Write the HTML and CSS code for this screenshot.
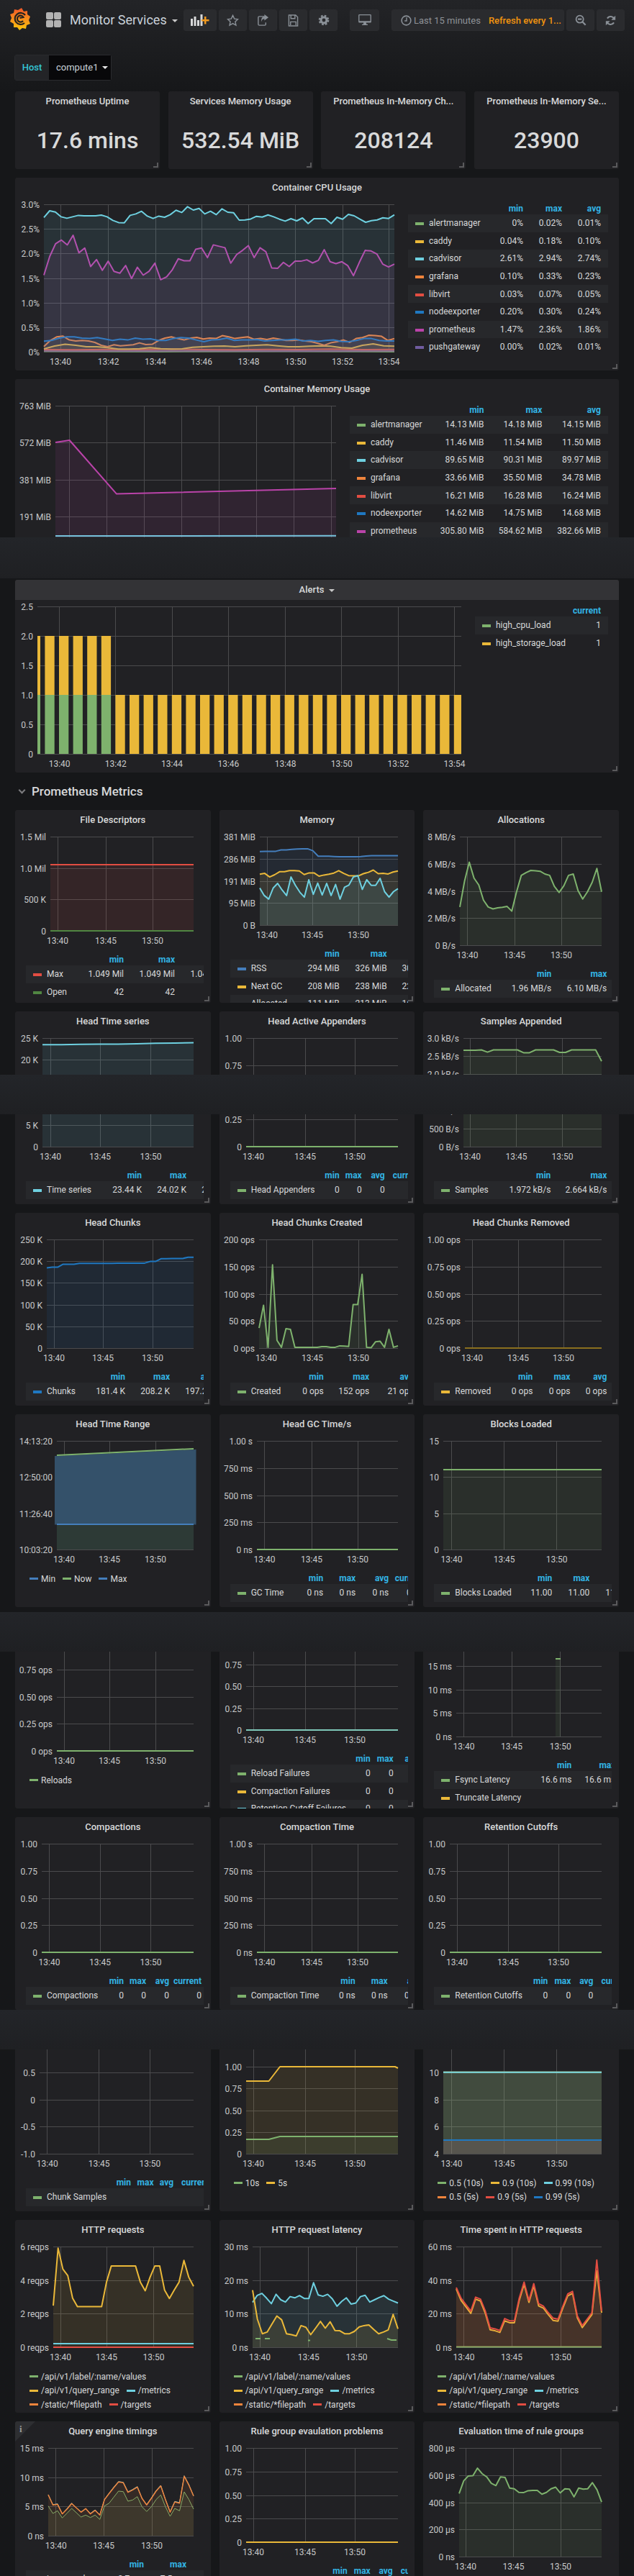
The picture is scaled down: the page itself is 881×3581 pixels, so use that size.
FILE: index.html
```html
<!DOCTYPE html>
<html lang="en">
<head>
  <meta charset="UTF-8">
  <meta name="viewport" content="width=device-width, initial-scale=1.0">
  <title>Monitor Services - Grafana</title>
  <link rel="stylesheet" href="styles.css">
</head>
<body>
  <nav class="navbar">
    <svg class="logo" viewBox="0 0 28 31" width="28" height="31">
      <defs>
        <linearGradient id="flame" x1="0" y1="0" x2="0" y2="1">
          <stop offset="0" stop-color="#f0562a"/>
          <stop offset="1" stop-color="#fbc60c"/>
        </linearGradient>
      </defs>
      <path fill="url(#flame)" d="M16 0l3 5 5-1 0 5 4 3-2 5 2 5-5 2-1 5-5-1-4 3-3-4-5 0 0-5-5-3 2-5-2-5 5-2 1-5 5 1z"/>
      <path fill="none" stroke="#23201f" stroke-width="2.2" d="M20 21a8 8 0 1 1 1-11"/>
      <path fill="none" stroke="#23201f" stroke-width="2.2" d="M18 18a4.5 4.5 0 1 1 .5-5l-5 1"/>
    </svg>
    <div class="apps-icon"><i></i><i></i><i></i><i></i></div>
    <div class="dash-title">Monitor Services<span class="caret"></span></div>
    <button class="btn btn-add">
      <svg viewBox="0 0 26 16" width="26" height="16">
        <path fill="#d8d9da" d="M0 6h3v10H0zM4.500 3h3v13h-3zM9 8h3v8H9zM13.500 0h3v16h-3z"/>
        <path fill="#f29a1f" d="M19 3h2.500v4H25.500v2.500H21.500v4H19v-4H15V7h4z"/>
      </svg>
    </button>
    <button class="btn">
      <svg viewBox="0 0 18 18" width="17" height="17"><path fill="none" stroke="#8a9097" stroke-width="1.500" d="M9 1.500l2.300 5 5.200.6-3.900 3.600 1.100 5.300L9 13.300 4.300 16l1.100-5.300L1.500 7.100l5.200-.6z"/></svg>
    </button>
    <button class="btn">
      <svg viewBox="0 0 18 18" width="17" height="17"><path fill="none" stroke="#8a9097" stroke-width="1.500" d="M11 3H3.500A1.500 1.500 0 0 0 2 4.500v10A1.500 1.500 0 0 0 3.500 16h8a1.500 1.500 0 0 0 1.500-1.500V12"/><path fill="#8a9097" d="M11 0l6 4.500-6 4.500V6.500C8.500 6.500 7 8 6.500 11 6 6 8 3.300 11 3z"/></svg>
    </button>
    <button class="btn">
      <svg viewBox="0 0 16 18" width="15" height="17"><path fill="none" stroke="#8a9097" stroke-width="1.500" d="M1.500 1h10l3 3v13h-13zM4.500 1v5h6V1M4 16v-5h8v5"/></svg>
    </button>
    <button class="btn">
      <svg viewBox="0 0 18 18" width="16" height="16"><circle cx="9" cy="9" r="4.500" fill="none" stroke="#8a9097" stroke-width="3.500"/><circle cx="9" cy="9" r="7" fill="none" stroke="#8a9097" stroke-width="2.500" stroke-dasharray="3 2.500"/></svg>
    </button>
    <button class="btn btn-tv">
      <svg viewBox="0 0 20 18" width="18" height="16"><path fill="#8a9097" d="M1.500 0h17A1.500 1.500 0 0 1 20 1.500v10a1.500 1.500 0 0 1-1.500 1.500H12l.5 2.500h2V17h-9v-1.500h2L8 13H1.500A1.500 1.500 0 0 1 0 11.500v-10A1.500 1.500 0 0 1 1.500 0zM1.500 1.500v9h17v-9z"/></svg>
    </button>
    <button class="btn btn-time">
      <svg viewBox="0 0 16 16" width="15" height="15"><circle cx="8" cy="8" r="6.800" fill="none" stroke="#8a9097" stroke-width="1.700"/><path fill="none" stroke="#8a9097" stroke-width="1.500" d="M8.500 3.500v5H5.500"/></svg>
      <span class="time-text">Last 15 minutes</span>
      <span class="refresh-text">Refresh every 1...</span>
    </button>
    <button class="btn">
      <svg viewBox="0 0 18 18" width="16" height="16"><circle cx="7.500" cy="7.500" r="5.700" fill="none" stroke="#8a9097" stroke-width="2"/><path stroke="#8a9097" stroke-width="2.500" d="M11.500 11.500L16.500 16.500M4.500 7.500h6"/></svg>
    </button>
    <button class="btn">
      <svg viewBox="0 0 18 18" width="15" height="15"><path fill="none" stroke="#8a9097" stroke-width="2.500" d="M15 6.500A6.500 6.500 0 0 0 3.500 5.500M3 11.500A6.500 6.500 0 0 0 14.500 12.500"/><path fill="#8a9097" d="M17 1v7h-7zM1 17v-7h7z"/></svg>
    </button>
  </nav>

  <div class="submenu">
    <span class="var-label">Host</span>
    <span class="var-value">compute1<span class="caret"></span></span>
  </div>

  <section class="stats">
    <div class="panel stat"><h3 class="panel-title">Prometheus Uptime</h3><div class="stat-value">17.6 mins</div></div>
    <div class="panel stat"><h3 class="panel-title">Services Memory Usage</h3><div class="stat-value">532.54 MiB</div></div>
    <div class="panel stat"><h3 class="panel-title">Prometheus In-Memory Ch...</h3><div class="stat-value">208124</div></div>
    <div class="panel stat"><h3 class="panel-title">Prometheus In-Memory Se...</h3><div class="stat-value">23900</div></div>
  </section>

  <section id="wide" class="wide-panels"></section>

  <div class="row-title"><span class="chevron"></span>Prometheus Metrics</div>

  <section id="metrics" class="metrics-grid"></section>

  <!-- the sticky navbar shows up again as blank strips in the full page capture -->
  <div class="nav-strip strip-1"></div>
  <div class="nav-strip strip-2"></div>
  <div class="nav-strip strip-3"></div>
  <div class="nav-strip strip-4"></div>

  <script src="charts.js"></script>
</body>
</html>
```

FILE: styles.css
```css
* {
  box-sizing: border-box;
}

html, body {
  margin: 0;
  padding: 0;
}

body {
  position: relative;
  height: 3581px;
  overflow: hidden;
  font-family: Roboto, "Liberation Sans", sans-serif;
  font-size: 12px;
  color: #d8d9da;
  background: #161719 linear-gradient(#232427, #161719 130px) no-repeat;
}

.navbar {
  display: flex;
  align-items: flex-start;
  height: 56px;
  padding: 11px 0 0 14px;
}

.apps-icon {
  display: grid;
  grid-template-columns: 10px 10px;
  gap: 1px;
  margin: 6px 0 0 22px;
}

.apps-icon i {
  display: block;
  width: 10px;
  height: 10px;
  border-radius: 2px;
  background: #b2b2b2;
}

.dash-title {
  width: 158px;
  margin: 5px 0 0 12px;
  font-size: 18px;
  line-height: 24px;
  color: #c9d1d9;
  white-space: nowrap;
}

.caret {
  display: inline-block;
  margin-left: 7px;
  vertical-align: middle;
  border-top: 4px solid #c8c8c8;
  border-left: 4px solid transparent;
  border-right: 4px solid transparent;
}

.btn {
  display: flex;
  align-items: center;
  justify-content: center;
  width: 39px;
  height: 30px;
  margin: 2px 3px 0 0;
  padding: 0;
  border: 1px solid #2b2c2f;
  border-radius: 3px;
  background: #2a2b2e;
  font: inherit;
}

.btn-add {
  width: 46px;
}

.btn-tv {
  width: 41px;
  margin-left: 14px;
}

.btn-time {
  justify-content: flex-start;
  width: 240px;
  margin-left: 14px;
  padding-left: 12px;
  font-size: 13px;
  white-space: nowrap;
}

.time-text {
  margin-left: 3px;
  color: #8e9297;
}

.refresh-text {
  margin-left: 11px;
  font-weight: 500;
  color: #f1930f;
}

.submenu {
  display: flex;
  width: 135px;
  height: 36px;
  margin: 20px 0 0 20px;
  border: 1px solid #2a2b2e;
  border-radius: 3px;
  font-size: 13px;
  line-height: 34px;
}

.var-label {
  width: 47px;
  text-align: center;
  font-weight: 500;
  color: #33c5d5;
  background: #232427;
}

.var-value {
  flex: 1;
  padding-left: 10px;
  color: #c9d1d9;
  background: #08080a;
}

.var-value .caret {
  margin: -2px 0 0 5px;
  border-top-color: #e6e6e6;
}

.panel {
  position: relative;
  height: 268px;
  overflow: hidden;
  border-radius: 3px;
  background: #212124;
}

.panel::after {
  content: "";
  position: absolute;
  right: 2px;
  bottom: 2px;
  width: 5px;
  height: 5px;
  border-right: 2px solid #5a5a5c;
  border-bottom: 2px solid #5a5a5c;
}

.panel-title {
  height: 28px;
  margin: 0;
  padding-top: 6px;
  font-size: 13px;
  font-weight: 500;
  line-height: 16px;
  text-align: center;
  white-space: nowrap;
  color: #d8d9da;
}

.panel-title.active {
  padding-top: 6px;
  background: #333336;
}

.stats {
  display: grid;
  grid-template-columns: repeat(4, 201px);
  justify-content: space-between;
  margin: 15px 21px 0;
}

.stat {
  height: 108px;
}

.stat-value {
  margin-top: 21px;
  font-size: 32px;
  font-weight: 500;
  line-height: 38px;
  text-align: center;
}

.wide-panels {
  display: flex;
  flex-direction: column;
  gap: 12px;
  margin: 12px 21px 0;
}

.wide-panels .panel:last-child {
  margin-top: -1px;
}

.graph-body {
  display: flex;
}

.graph-body svg {
  display: block;
  flex: none;
}

.tick {
  font-size: 12px;
  fill: #c8c9ca;
}

.grid-line {
  stroke: #4b4b4d;
  stroke-width: 1;
  shape-rendering: crispEdges;
}

.legend {
  flex: none;
  overflow: hidden;
  white-space: nowrap;
}

.wide-panels .legend {
  margin-top: 6px;
}

.legend-row {
  display: grid;
  align-items: center;
  height: 24.6px;
  min-width: 100%;
  width: max-content;
}

.legend-head {
  height: 17px;
  font-weight: 700;
  color: #33b5e5;
}

.legend-row:nth-child(even) {
  background: #27282b;
}

.legend-cell {
  text-align: right;
}

.legend-first {
  margin-left: auto;
}

.legend-name {
  display: flex;
  align-items: center;
  overflow: visible;
  padding-left: 10px;
}

.swatch {
  flex: none;
  width: 12px;
  height: 4px;
  margin: 2px 7px 0 0;
}

.inline-legend {
  margin-left: 20px;
}

.inline-line {
  display: flex;
  align-items: center;
  gap: 10px;
  height: 19.5px;
  white-space: nowrap;
}

.inline-item {
  display: flex;
  align-items: center;
}

.inline-item .swatch {
  height: 3px;
  margin: 0 4px 0 0;
}

.info-corner {
  position: absolute;
  top: 0;
  left: 0;
  width: 28px;
  height: 28px;
  padding: 4px 0 0 6px;
  clip-path: polygon(0 0, 100% 0, 0 100%);
  background: #2e2f32;
  font-family: "Liberation Serif", serif;
  font-size: 13px;
  font-weight: 700;
  line-height: 14px;
  color: #9a9b9c;
}

.row-title {
  display: flex;
  align-items: center;
  height: 52px;
  padding-left: 27px;
  font-size: 17px;
  font-weight: 500;
}

.chevron {
  width: 7px;
  height: 7px;
  margin: 0 10px 3px 0;
  border-right: 2px solid #7b7b7e;
  border-bottom: 2px solid #7b7b7e;
  transform: rotate(45deg);
}

.metrics-grid {
  display: grid;
  grid-template-columns: repeat(3, 1fr);
  gap: 12px;
  margin: 0 21px;
}

.nav-strip {
  position: absolute;
  left: 0;
  right: 0;
  height: 55px;
  background: linear-gradient(#232529, #1f2023);
}

.strip-1 {
  top: 747px;
  height: 57px;
}

.strip-2 {
  top: 1494px;
}

.strip-3 {
  top: 2241px;
}

.strip-4 {
  top: 2794px;
}
```

FILE: charts.js
```js
const GREEN = '#7eb26d', YELLOW = '#eab839', CYAN = '#6ed0e0', ORANGE = '#ef843c',
  RED = '#e24d42', BLUE = '#1f78c1', MAGENTA = '#ba43a9', PURPLE = '#705da0',
  DKGREEN = '#508642', STEEL = '#447ebc';

const MIN3 = ['min', 'max', 'avg'];
const MIN4 = ['min', 'max', 'avg', 'current'];
const HTTP_LEGEND = [
  [['/api/v1/label/:name/values', GREEN]],
  [['/api/v1/query_range', YELLOW], ['/metrics', CYAN]],
  [['/static/*filepath', ORANGE], ['/targets', RED]]
];
const HTTP_BOTTOM = [
  { c: CYAN, y: [.965, .965], w: 2 },
  { c: ORANGE, y: [1, 1], w: 2 },
  { c: RED, y: [1, 1], w: 2 }
];

// line series: y values are plot readings, range gives the readings at plot top and bottom
const wide = [
  {
    title: 'Container CPU Usage', left: 40, right: 527, bottom: 242, width: 546,
    ylabels: ['3.0%', '2.5%', '2.0%', '1.5%', '1.0%', '0.5%', '0%'],
    xs: [63, 129.6, 195, 259, 324.5, 389.7, 455, 519.5],
    xlabels: ['13:40', '13:42', '13:44', '13:46', '13:48', '13:50', '13:52', '13:54'],
    range: [853, 1467],
    series: [
      { c: GREEN, y: [1465, 1466, 1465, 1466], fill: 1 },
      { c: PURPLE, y: [1463, 1464, 1463, 1464, 1463], fill: 1 },
      { c: RED, y: [1458, 1459, 1457, 1458, 1456, 1458, 1459, 1457, 1458, 1456, 1458, 1457], fill: 1 },
      { c: YELLOW, y: [1455, 1443, 1436, 1440, 1446, 1446, 1450, 1456, 1456, 1454, 1450, 1454, 1456, 1455, 1448, 1446, 1444, 1443, 1446, 1442, 1440, 1438, 1442, 1446, 1446, 1444, 1442, 1444, 1450, 1452, 1440, 1434, 1442, 1444], fill: 1 },
      { c: ORANGE, y: [1445, 1420, 1405, 1402, 1418, 1422, 1420, 1422, 1428, 1440, 1446, 1438, 1442, 1440, 1438, 1430, 1437, 1436, 1420, 1410, 1405, 1412, 1418, 1410, 1407, 1414, 1410, 1412, 1400, 1405, 1412, 1408, 1405, 1415, 1412, 1416, 1410, 1415, 1420, 1420, 1418, 1422, 1425, 1432, 1440, 1430, 1425, 1418, 1428, 1412, 1408, 1398, 1400, 1403, 1420, 1412], fill: 1 },
      { c: BLUE, y: [1423, 1420, 1410, 1405, 1405, 1410, 1412, 1408, 1414, 1420, 1415, 1418, 1410, 1415, 1413, 1420, 1420, 1412, 1408, 1410, 1418, 1425, 1418, 1416, 1410, 1420, 1418, 1418, 1416, 1422, 1420, 1418, 1418, 1415, 1422, 1420, 1424, 1420, 1418, 1424, 1425, 1420, 1412, 1412, 1420, 1422, 1422], fill: 1 },
      { c: MAGENTA, y: [1148, 1070, 1017, 1002, 1022, 982, 1055, 1035, 1112, 1083, 1128, 1090, 1132, 1140, 1108, 1162, 1115, 1148, 1132, 1098, 1167, 1155, 1125, 1080, 1088, 1088, 1040, 1035, 1075, 1022, 1028, 1034, 1098, 1062, 1045, 1025, 1075, 1034, 1050, 1118, 1120, 1095, 1112, 1090, 1090, 1084, 1097, 1086, 1042, 1092, 1100, 1092, 1108, 1150, 1095, 1045, 1047, 1060, 1102, 1114, 1102], fill: 1 },
      { c: CYAN, y: [908, 880, 885, 905, 911, 905, 899, 901, 901, 901, 898, 905, 920, 929, 930, 899, 893, 882, 902, 912, 902, 907, 896, 878, 887, 863, 877, 870, 893, 882, 896, 872, 886, 888, 919, 918, 914, 903, 906, 897, 905, 915, 923, 913, 922, 910, 933, 913, 913, 913, 933, 907, 915, 895, 901, 915, 928, 921, 918, 909, 912, 897], fill: 1 }
    ],
    legend: {
      x: 546, w: 278, rights: [706, 760, 814], heads: MIN3,
      rows: [
        ['alertmanager', GREEN, '0%', '0.02%', '0.01%'],
        ['caddy', YELLOW, '0.04%', '0.18%', '0.10%'],
        ['cadvisor', CYAN, '2.61%', '2.94%', '2.74%'],
        ['grafana', ORANGE, '0.10%', '0.33%', '0.23%'],
        ['libvirt', RED, '0.03%', '0.07%', '0.05%'],
        ['nodeexporter', BLUE, '0.20%', '0.30%', '0.24%'],
        ['prometheus', MAGENTA, '1.47%', '2.36%', '1.86%'],
        ['pushgateway', PURPLE, '0.00%', '0.02%', '0.01%']
      ]
    }
  },
  {
    title: 'Container Memory Usage', left: 56, right: 446, bottom: 242, width: 465,
    ylabels: ['763 MiB', '572 MiB', '381 MiB', '191 MiB', '0 B'],
    xs: [75.6, 127, 179.5, 231, 283.5, 335, 387.4, 439],
    xlabels: ['13:40', '13:42', '13:44', '13:46', '13:48', '13:50', '13:52', '13:54'],
    series: [
      { c: CYAN, y: [.883, .882], fill: 1 },
      { c: MAGENTA, pts: [[56, 88], [75.6, 85], [141, 159.6], [446, 152]], fill: 1 }
    ],
    legend: {
      x: 465, w: 359, rights: [651.5, 732.4, 814], heads: MIN3,
      rows: [
        ['alertmanager', GREEN, '14.13 MiB', '14.18 MiB', '14.15 MiB'],
        ['caddy', YELLOW, '11.46 MiB', '11.54 MiB', '11.50 MiB'],
        ['cadvisor', CYAN, '89.65 MiB', '90.31 MiB', '89.97 MiB'],
        ['grafana', ORANGE, '33.66 MiB', '35.50 MiB', '34.78 MiB'],
        ['libvirt', RED, '16.21 MiB', '16.28 MiB', '16.24 MiB'],
        ['nodeexporter', BLUE, '14.62 MiB', '14.75 MiB', '14.68 MiB'],
        ['prometheus', MAGENTA, '305.80 MiB', '584.62 MiB', '382.66 MiB']
      ]
    }
  },
  {
    title: 'Alerts', active: true, left: 31, right: 620, bottom: 242, width: 639,
    ylabels: ['2.5', '2.0', '1.5', '1.0', '0.5', '0'],
    xs: [61.6, 139.7, 218, 296.4, 375.6, 453.7, 532.4, 610.5],
    xlabels: ['13:40', '13:42', '13:44', '13:46', '13:48', '13:50', '13:52', '13:54'],
    bars: true,
    legend: {
      x: 639, w: 185, rights: [814], heads: ['current'],
      rows: [
        ['high_cpu_load', GREEN, '1'],
        ['high_storage_load', YELLOW, '1']
      ]
    }
  }
];

const BOTTOM = 188;
const X1 = ['13:40', '13:45', '13:50'];
const UNIT = ['1.00', '0.75', '0.50', '0.25', '0'];
const OPS = ['1.00 ops', '0.75 ops', '0.50 ops', '0.25 ops', '0 ops'];
const TIME = ['1.00 s', '750 ms', '500 ms', '250 ms', '0 ns'];

const metrics = [
  {
    title: 'File Descriptors', left: 49, bottom: 168, xs: [59, 126, 191],
    ylabels: ['1.5 Mil', '1.0 Mil', '500 K', '0'],
    series: [{ c: RED, y: [.298, .298], fill: 1 }, { c: DKGREEN, y: [1, 1] }],
    legend: { rights: [151, 222, 293], heads: MIN3, rows: [
      ['Max', RED, '1.049 Mil', '1.049 Mil', '1.049 Mil'],
      ['Open', DKGREEN, '42', '42', '42']] }
  },
  {
    title: 'Memory', left: 56, bottom: 160, xs: [66, 129, 193],
    ylabels: ['381 MiB', '286 MiB', '191 MiB', '95 MiB', '0 B'], range: [139, 459],
    series: [
      { c: STEEL, fill: 1, y: [193, 192, 192, 192, 187, 187, 185, 184, 183, 183, 190, 210, 210, 210, 211, 212, 212, 212, 212, 211, 209, 208, 208, 208, 208, 208, 208] },
      { c: YELLOW, fill: 1, y: [275, 272, 285, 277, 266, 266, 262, 262, 263, 276, 270, 270, 282, 278, 275, 271, 262, 272, 280, 281, 281, 273, 268, 260, 273, 272, 274, 267, 263] },
      { c: CYAN, fill: 1, y: [325, 352, 365, 325, 308, 332, 352, 285, 315, 340, 358, 295, 348, 307, 350, 308, 352, 312, 365, 322, 314, 285, 280, 330, 295, 315, 315, 290, 338, 358, 338, 327] }
    ],
    legend: { rights: [167, 233, 298], heads: MIN3, rows: [
      ['RSS', STEEL, '294 MiB', '326 MiB', '307 MiB'],
      ['Next GC', YELLOW, '208 MiB', '238 MiB', '223 MiB'],
      ['Allocated', CYAN, '111 MiB', '213 MiB', '161 MiB']] }
  },
  {
    title: 'Allocations', left: 51, xs: [61.5, 127, 192],
    ylabels: ['8 MB/s', '6 MB/s', '4 MB/s', '2 MB/s', '0 B/s'], range: [139, 534],
    series: [{ c: GREEN, fill: 1, y: [395, 300, 232, 290, 315, 370, 395, 402, 398, 396, 393, 410, 340, 280, 270, 262, 263, 265, 275, 280, 320, 342, 318, 280, 275, 335, 366, 340, 305, 255, 340] }],
    legend: { rights: [178, 255, 330], heads: MIN3, rows: [['Allocated', GREEN, '1.96 MB/s', '6.10 MB/s', '4.00 MB/s']] }
  },
  {
    title: 'Head Time series', left: 38, xs: [49, 118, 188.5],
    ylabels: ['25 K', '20 K', '15 K', '10 K', '5 K', '0'], range: [871, 1264],
    series: [{ c: CYAN, fill: 1, y: [895, 895, 894, 893, 893, 892, 890, 889, 888] }],
    legend: { rights: [176, 238, 300], heads: MIN3, rows: [['Time series', CYAN, '23.44 K', '24.02 K', '23.73 K']] }
  },
  {
    title: 'Head Active Appenders', left: 37, xs: [47, 119, 188], ylabels: UNIT,
    series: [{ c: GREEN, y: [1, 1] }],
    legend: { rights: [167, 198, 230, 280], heads: MIN4, rows: [['Head Appenders', GREEN, '0', '0', '0', '0']] }
  },
  {
    title: 'Samples Appended', left: 56, xs: [65, 129.5, 193.5],
    ylabels: ['3.0 kB/s', '2.5 kB/s', '2.0 kB/s', '1.5 kB/s', '1.0 kB/s', '500 B/s', '0 B/s'], range: [871, 1264],
    series: [{ c: GREEN, fill: 1, y: [915, 915, 915, 914, 922, 914, 914, 914, 914, 914, 924, 924, 914, 914, 914, 914, 923, 923, 914, 914, 914, 914, 914, 955] }],
    legend: { rights: [177, 255, 330], heads: MIN3, rows: [['Samples', GREEN, '1.972 kB/s', '2.664 kB/s', '2.600 kB/s']] }
  },
  {
    title: 'Head Chunks', left: 44, xs: [54, 122, 191],
    ylabels: ['250 K', '200 K', '150 K', '100 K', '50 K', '0'], range: [113, 508],
    series: [{ c: BLUE, fill: 1, y: [216, 214, 214, 203, 203, 203, 200, 200, 200, 200, 200, 200, 200, 199, 199, 199, 199, 199, 199, 193, 193, 183, 183, 182, 182, 182, 178, 178] }],
    legend: { rights: [153, 215, 277], heads: MIN3, rows: [['Chunks', BLUE, '181.4 K', '208.2 K', '197.2 K']] }
  },
  {
    title: 'Head Chunks Created', left: 55, xs: [65, 129, 193],
    ylabels: ['200 ops', '150 ops', '100 ops', '50 ops', '0 ops'], range: [113, 508],
    series: [{ c: GREEN, fill: 1, y: [435, 352, 505, 205, 480, 505, 437, 440, 505, 505, 505, 505, 505, 505, 503, 503, 505, 505, 500, 501, 502, 350, 350, 240, 505, 507, 485, 483, 505, 440, 505, 500] }],
    legend: { rights: [145, 208.5, 270], heads: MIN3, rows: [['Created', GREEN, '0 ops', '152 ops', '21 ops']] }
  },
  {
    title: 'Head Chunks Removed', left: 58, xs: [68, 132, 195], ylabels: OPS,
    series: [{ c: '#8a6f1e', y: [1, 1] }],
    legend: { rights: [152, 204, 255], heads: MIN3, rows: [['Removed', YELLOW, '0 ops', '0 ops', '0 ops']] }
  },
  {
    title: 'Head Time Range', left: 58, xs: [68, 131, 195],
    ylabels: ['14:13:20', '12:50:00', '11:26:40', '10:03:20'],
    raw: '<path fill="#2d3a36" d="M58 153h190v35H58z"/><path fill="#34516a" d="M55 58L251.500 49V153.500H55z"/>' +
      '<path stroke="#7eb26d" stroke-width="2" d="M58 57L248 48"/><path stroke="#447ebc" stroke-width="2" d="M58 153H248"/>',
    inline: [[['Min', STEEL], ['Now', GREEN], ['Max', STEEL]]]
  },
  {
    title: 'Head GC Time/s', left: 52, xs: [62.5, 128, 192], ylabels: TIME,
    series: [{ c: GREEN, y: [1, 1] }],
    legend: { rights: [144.5, 189.5, 235.5, 283], heads: MIN4, rows: [['GC Time', GREEN, '0 ns', '0 ns', '0 ns', '0 ns']] }
  },
  {
    title: 'Blocks Loaded', left: 28, xs: [39.5, 112.6, 185.6], ylabels: ['15', '10', '5', '0'],
    series: [{ c: GREEN, fill: 1, y: [.265, .265] }],
    legend: { rights: [179, 231, 283], heads: MIN3, rows: [['Blocks Loaded', GREEN, '11.00', '11.00', '11.00']] }
  },
  {
    title: '', left: 58, xs: [68, 131, 195], ylabels: OPS,
    series: [{ c: GREEN, y: [1, 1] }],
    inline: [[['Reloads', GREEN]]]
  },
  {
    title: '', left: 37, bottom: 159, xs: [47, 119, 188], ylabels: UNIT,
    series: [{ c: '#7ec8b8', y: [1, 1] }],
    legend: { rights: [210, 242, 277], heads: MIN3, rows: [
      ['Reload Failures', GREEN, '0', '0', '0'],
      ['Compaction Failures', YELLOW, '0', '0', '0'],
      ['Retention Cutoff Failures', CYAN, '0', '0', '0']] }
  },
  {
    title: '', left: 46, bottom: 168, xs: [56.5, 123, 190.7],
    ylabels: ['20 ms', '15 ms', '10 ms', '5 ms', '0 ns'],
    raw: '<path fill="#7eb26d" fill-opacity=".1" d="M184 59h7v109h-7z"/><path stroke="#7eb26d" stroke-width="2" d="M184 60h7"/>',
    legend: { rights: [206, 267, 330], heads: MIN3, rows: [
      ['Fsync Latency', GREEN, '16.6 ms', '16.6 ms', '16.6 ms'],
      ['Truncate Latency', YELLOW]] }
  },
  {
    title: 'Compactions', left: 37, xs: [47.5, 118, 188.5], ylabels: UNIT,
    series: [{ c: GREEN, y: [1, 1] }],
    legend: { rights: [151, 182, 214, 259], heads: MIN4, rows: [['Compactions', GREEN, '0', '0', '0', '0']] }
  },
  {
    title: 'Compaction Time', left: 52, xs: [62.5, 128, 192], ylabels: TIME,
    series: [{ c: GREEN, y: [1, 1] }],
    legend: { rights: [189, 234, 280], heads: MIN3, rows: [['Compaction Time', GREEN, '0 ns', '0 ns', '0 ns']] }
  },
  {
    title: 'Retention Cutoffs', left: 37, xs: [47, 118, 188], ylabels: UNIT,
    series: [{ c: GREEN, y: [1, 1] }],
    legend: { rights: [173, 205, 236, 286], heads: MIN4, rows: [['Retention Cutoffs', GREEN, '0', '0', '0', '0']] }
  },
  {
    title: '', left: 34, xs: [44.7, 116.6, 187.4], ylabels: ['1.0', '0.5', '0', '-0.5', '-1.0'],
    legend: { rights: [161, 192.5, 220, 270], heads: MIN4, rows: [['Chunk Samples', GREEN]] }
  },
  {
    title: '', left: 37, xs: [47, 119, 188], ylabels: ['1.25', '1.00', '0.75', '0.50', '0.25', '0'],
    series: [
      { c: YELLOW, fill: 1, pts: [[37, 87], [68.6, 87], [84, 67], [244, 67], [248, 69]] },
      { c: GREEN, fill: 1, pts: [[37, 168], [68.6, 168], [84, 164], [248, 164]] }
    ],
    inline: [[['10s', GREEN], ['5s', YELLOW]]]
  },
  {
    title: '', left: 28, xs: [39.5, 112.6, 185.6], ylabels: ['12', '10', '8', '6', '4'],
    series: [
      { c: GREEN, fill: 1, y: [.25, .25] },
      { c: YELLOW, fill: 1, y: [.25, .25] },
      { c: ORANGE, fill: 1, y: [.874, .874] },
      { c: RED, fill: 1, y: [.874, .874] },
      { c: CYAN, fill: 1, y: [.25, .25] },
      { c: BLUE, fill: 1, y: [.874, .874] }
    ],
    inline: [
      [['0.5 (10s)', GREEN], ['0.9 (10s)', YELLOW], ['0.99 (10s)', CYAN]],
      [['0.5 (5s)', ORANGE], ['0.9 (5s)', RED], ['0.99 (5s)', BLUE]]
    ]
  },
  {
    title: 'HTTP requests', left: 53, bottom: 177, xs: [63, 127, 192.5],
    ylabels: ['6 reqps', '4 reqps', '2 reqps', '0 reqps'], range: [545, 857],
    series: [
      { c: YELLOW, fill: 1, y: [728, 550, 615, 635, 705, 731, 731, 731, 731, 731, 731, 655, 605, 605, 605, 605, 605, 605, 655, 682, 640, 605, 605, 680, 706, 680, 655, 588, 640, 668] }
    ].concat(HTTP_BOTTOM.map(s => Object.assign({}, s, { y: s.y.map(v => 545 + v * 312) }))),
    inline: HTTP_LEGEND
  },
  {
    title: 'HTTP request latency', left: 46, bottom: 177, xs: [56, 123.7, 190.5],
    ylabels: ['30 ms', '20 ms', '10 ms', '0 ns'], range: [545, 857],
    series: [
      { c: CYAN, fill: 1, y: [718, 696, 690, 705, 722, 693, 710, 717, 700, 704, 697, 706, 706, 657, 695, 699, 693, 707, 730, 715, 704, 723, 720, 700, 696, 717, 710, 703, 697, 708, 714, 720] },
      { c: YELLOW, fill: 1, y: [680, 770, 815, 810, 785, 760, 772, 815, 818, 822, 790, 795, 818, 798, 777, 798, 778, 805, 806, 815, 815, 808, 794, 790, 788, 802, 815, 810, 803, 755, 800] }
    ],
    raw: '<path stroke="#7eb26d" stroke-width="2" d="M50 165h7M63 165h7M123 167.500h3M233 165l6 2h7"/>',
    inline: HTTP_LEGEND
  },
  {
    title: 'Time spent in HTTP requests', left: 46, bottom: 177, xs: [56.5, 123, 191],
    ylabels: ['60 ms', '40 ms', '20 ms', '0 ns'], range: [545, 857],
    series: [
      { c: GREEN, y: [856, 856] },
      { c: YELLOW, fill: 1, y: [677, 712, 732, 752, 708, 714, 752, 803, 806, 811, 775, 781, 781, 712, 662, 718, 667, 729, 736, 756, 774, 776, 736, 698, 690, 766, 796, 776, 756, 620, 750] },
      { c: RED, fill: 1, y: [672, 705, 725, 745, 702, 708, 745, 797, 800, 805, 768, 775, 775, 705, 655, 712, 660, 722, 730, 750, 767, 770, 730, 692, 684, 760, 790, 770, 750, 587, 745] }
    ],
    inline: HTTP_LEGEND
  },
  {
    title: 'Query engine timings', info: true, left: 46, bottom: 159, xs: [56.7, 123, 190],
    ylabels: ['15 ms', '10 ms', '5 ms', '0 ns'], range: [130, 496],
    series: [
      { c: GREEN, fill: 1, w: 1, y: [372, 403, 392, 422, 402, 382, 400, 418, 410, 420, 410, 428, 372, 360, 335, 310, 312, 352, 347, 333, 375, 395, 375, 345, 326, 375, 415, 382, 392, 313, 345, 385] },
      { c: CYAN, w: 1, y: [325, 366, 363, 405, 383, 360, 380, 396, 383, 403, 388, 410, 345, 318, 293, 270, 273, 313, 303, 291, 340, 366, 338, 308, 286, 345, 396, 353, 358, 246, 283, 330] },
      { c: ORANGE, fill: 1, w: 1.5, y: [325, 368, 365, 405, 385, 362, 380, 398, 383, 405, 390, 410, 345, 320, 295, 272, 275, 315, 305, 293, 340, 368, 340, 310, 288, 345, 398, 355, 360, 248, 285, 330] }
    ],
    legend: { rights: [179, 238, 300], heads: MIN3, rows: [['inner_eval', GREEN, '2.7 ms', '7.5 ms', '4.9 ms']] }
  },
  {
    title: 'Rule group evaulation problems', left: 37, bottom: 168, xs: [47, 119, 188], ylabels: UNIT,
    series: [{ c: YELLOW, y: [1, 1] }],
    legend: { rights: [178, 210, 241, 291], heads: MIN4, rows: [['Rule evaluation failures', YELLOW, '0', '0', '0', '0']] }
  },
  {
    title: 'Evaluation time of rule groups', left: 50, xs: [59, 125.5, 191],
    ylabels: ['800 µs', '600 µs', '400 µs', '200 µs', '0 ns'], range: [1170, 1508],
    series: [{ c: GREEN, fill: 1, y: [1312, 1272, 1257, 1256, 1233, 1250, 1260, 1280, 1287, 1260, 1262, 1295, 1297, 1308, 1309, 1303, 1302, 1302, 1314, 1308, 1297, 1292, 1310, 1297, 1298, 1322, 1295, 1298, 1297, 1278, 1300, 1338] }]
  }
];

const TOP = 37;

function seriesSvg(p, s) {
  const right = p.right || 248;
  const bottom = p.bottom || BOTTOM;
  const range = p.range || [0, 1];
  let pts = s.pts;
  if (!pts) {
    const step = (right - p.left) / (s.y.length - 1);
    const vals = s.y.map(v => (p.range && v <= 1 ? p.range[0] + v * (p.range[1] - p.range[0]) : v));
    pts = vals.map((v, i) => [p.left + i * step, TOP + (v - range[0]) / (range[1] - range[0]) * (bottom - TOP)]);
  }
  const line = pts.map(q => q[0].toFixed(1) + ',' + q[1].toFixed(1)).join(' ');
  let out = '';
  if (s.fill) {
    out += `<polygon fill="${s.c}" fill-opacity=".1" points="${pts[0][0]},${bottom} ${line} ${pts[pts.length - 1][0]},${bottom}"/>`;
  }
  return out + `<polyline fill="none" stroke="${s.c}" stroke-width="${s.w || 2}" stroke-linejoin="round" points="${line}"/>`;
}

function barsSvg(p) {
  // two stacked series: alert count drawn as bars every 30s
  let out = `<path fill="${GREEN}" d="M31 160h4v82h-4z"/><path fill="${YELLOW}" d="M31 78h4v82h-4z"/>`;
  for (let n = 0; n < 30; n++) {
    const x = 41.4 + n * 19.6;
    const w = Math.min(13.3, p.right - x);
    if (n < 5) {
      out += `<rect fill="${GREEN}" x="${x}" y="160" width="${w}" height="82"/><rect fill="${YELLOW}" x="${x}" y="78" width="${w}" height="82"/>`;
    } else {
      out += `<rect fill="${YELLOW}" x="${x}" y="160" width="${w}" height="82"/>`;
    }
  }
  return out;
}

function graphSvg(p) {
  const width = p.width || 272;
  const right = p.right || 248;
  const bottom = p.bottom || BOTTOM;
  const height = bottom + 28;
  const xlabels = p.xlabels || X1;
  let out = `<svg width="${width}" height="${height - 28}" viewBox="0 28 ${width} ${height - 28}">`;
  p.ylabels.forEach((t, i) => {
    const y = Math.round(TOP + i * (bottom - TOP) / (p.ylabels.length - 1)) + .5;
    out += `<line class="grid-line" x1="${p.left}" x2="${right}" y1="${y}" y2="${y}"/>`;
    out += `<text class="tick" x="${p.left - 6}" y="${y + 4}" text-anchor="end">${t}</text>`;
  });
  p.xs.forEach((x, i) => {
    out += `<line class="grid-line" x1="${x}" x2="${x}" y1="${TOP}" y2="${bottom}"/>`;
    out += `<text class="tick" x="${x}" y="${bottom + 18}" text-anchor="middle">${xlabels[i]}</text>`;
  });
  if (p.bars) out += barsSvg(p);
  (p.series || []).forEach(s => { out += seriesSvg(p, s); });
  if (p.raw) out += p.raw;
  return out + '</svg>';
}

function legendHtml(p) {
  const lg = p.legend;
  const x = lg.x === undefined ? 15 : lg.x;
  const w = lg.w || 247;
  const cols = lg.rights.map((r, i) => (r - (i ? lg.rights[i - 1] : x)) + 'px').join(' ');
  const tpl = `style="grid-template-columns: ${cols}"`;
  const margin = lg.x === undefined ? `margin-left: ${x}px; ` : '';
  let out = `<div class="legend" style="${margin}width: ${w}px">`;
  out += `<div class="legend-row legend-head" ${tpl}>`;
  lg.heads.forEach(h => { out += `<span class="legend-cell">${h}</span>`; });
  out += '</div>';
  lg.rows.forEach(r => {
    out += `<div class="legend-row" ${tpl}>`;
    // first column holds the series name and the min value
    out += `<span class="legend-name"><i class="swatch" style="background: ${r[1]}"></i>${r[0]}`;
    if (r[2] !== undefined) out += `<span class="legend-cell legend-first">${r[2]}</span>`;
    out += '</span>';
    r.slice(3).forEach(v => { out += `<span class="legend-cell">${v}</span>`; });
    out += '</div>';
  });
  return out + '</div>';
}

function inlineHtml(p) {
  return '<div class="inline-legend">' + p.inline.map(line =>
    '<div class="inline-line">' + line.map(it =>
      `<span class="inline-item"><i class="swatch" style="background: ${it[1]}"></i>${it[0]}</span>`).join('') + '</div>'
  ).join('') + '</div>';
}

function panelHtml(p, sideLegend) {
  let out = '<div class="panel">';
  if (p.info) out += '<div class="info-corner">i</div>';
  out += `<h3 class="panel-title${p.active ? ' active' : ''}">${p.title}${p.active ? '<span class="caret"></span>' : ''}</h3>`;
  if (sideLegend) {
    out += `<div class="graph-body">${graphSvg(p)}${legendHtml(p)}</div>`;
  } else {
    out += graphSvg(p);
    if (p.legend) out += legendHtml(p);
    if (p.inline) out += inlineHtml(p);
  }
  return out + '</div>';
}

document.getElementById('wide').innerHTML = wide.map(p => panelHtml(p, true)).join('');
document.getElementById('metrics').innerHTML = metrics.map(p => panelHtml(p, false)).join('');
```
